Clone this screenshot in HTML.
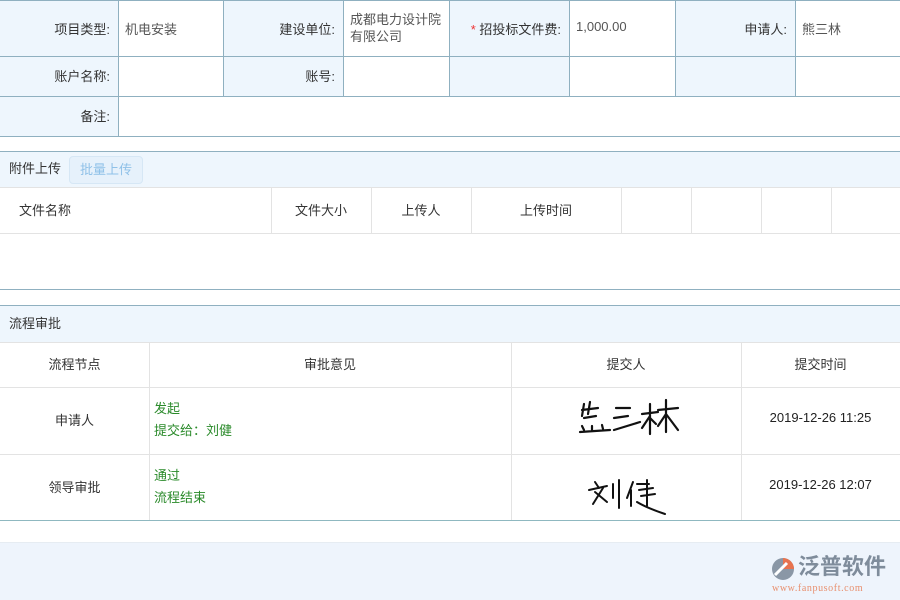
<!DOCTYPE html>
<html><head><meta charset="utf-8"><style>
*{margin:0;padding:0;box-sizing:border-box}
body{width:900px;height:600px;position:relative;background:#fff;font-family:"Liberation Sans","Noto Sans CJK SC",sans-serif;font-size:13px;color:#333;overflow:hidden}
.a{position:absolute}
.lb{background:#eef6fd}
.r{text-align:right;padding-right:8px}
.c{text-align:center}
</style></head><body>
<div class="a" style="left:0;top:0;width:900px;height:137px;border-top:1px solid #8fb0c0;"></div>
<div class="a lb" style="left:0;top:1px;width:118px;height:135px"></div>
<div class="a lb" style="left:223px;top:1px;width:120px;height:95px"></div>
<div class="a lb" style="left:449px;top:1px;width:120px;height:95px"></div>
<div class="a lb" style="left:675px;top:1px;width:120px;height:95px"></div>
<div class="a" style="left:0;top:56px;width:900px;height:1px;background:#8fb0c0"></div>
<div class="a" style="left:0;top:96px;width:900px;height:1px;background:#8fb0c0"></div>
<div class="a" style="left:0;top:136px;width:900px;height:1px;background:#8fb0c0"></div>
<div class="a" style="left:118px;top:0;width:1px;height:137px;background:#8fb0c0"></div>
<div class="a" style="left:223px;top:0;width:1px;height:97px;background:#8fb0c0"></div>
<div class="a" style="left:343px;top:0;width:1px;height:97px;background:#8fb0c0"></div>
<div class="a" style="left:449px;top:0;width:1px;height:97px;background:#8fb0c0"></div>
<div class="a" style="left:569px;top:0;width:1px;height:97px;background:#8fb0c0"></div>
<div class="a" style="left:675px;top:0;width:1px;height:97px;background:#8fb0c0"></div>
<div class="a" style="left:795px;top:0;width:1px;height:97px;background:#8fb0c0"></div>
<div class="a r" style="left:0;top:19px;width:118px">项目类型:</div>
<div class="a" style="left:125px;top:19px;color:#555">机电安装</div>
<div class="a r" style="left:223px;top:19px;width:120px">建设单位:</div>
<div class="a" style="left:350px;top:11px;color:#555;line-height:17px">成都电力设计院<br>有限公司</div>
<div class="a r" style="left:449px;top:19px;width:120px"><span style="color:#e33">*</span> 招投标文件费:</div>
<div class="a" style="left:576px;top:19px;color:#555">1,000.00</div>
<div class="a r" style="left:675px;top:19px;width:120px">申请人:</div>
<div class="a" style="left:802px;top:19px;color:#555">熊三林</div>
<div class="a r" style="left:0;top:66px;width:118px">账户名称:</div>
<div class="a r" style="left:223px;top:66px;width:120px">账号:</div>
<div class="a r" style="left:0;top:106px;width:118px">备注:</div>

<div class="a lb" style="left:0;top:151px;width:900px;height:37px;border-top:1px solid #8fb0c0;border-bottom:1px solid #e3e3e3"></div>
<div class="a" style="left:9px;top:158px">附件上传</div>
<div class="a c" style="left:69px;top:156px;width:74px;height:28px;line-height:26px;border:1px solid #d6e7f5;border-radius:4px;background:#e6f1fb;color:#8fc1e8">批量上传</div>
<div class="a" style="left:19px;top:200px">文件名称</div>
<div class="a c" style="left:271px;top:200px;width:100px">文件大小</div>
<div class="a c" style="left:371px;top:200px;width:100px">上传人</div>
<div class="a c" style="left:471px;top:200px;width:150px">上传时间</div>
<div class="a" style="left:271px;top:188px;width:1px;height:45px;background:#e3e3e3"></div>
<div class="a" style="left:371px;top:188px;width:1px;height:45px;background:#e3e3e3"></div>
<div class="a" style="left:471px;top:188px;width:1px;height:45px;background:#e3e3e3"></div>
<div class="a" style="left:621px;top:188px;width:1px;height:45px;background:#e3e3e3"></div>
<div class="a" style="left:691px;top:188px;width:1px;height:45px;background:#e3e3e3"></div>
<div class="a" style="left:761px;top:188px;width:1px;height:45px;background:#e3e3e3"></div>
<div class="a" style="left:831px;top:188px;width:1px;height:45px;background:#e3e3e3"></div>
<div class="a" style="left:0;top:233px;width:900px;height:1px;background:#e3e3e3"></div>
<div class="a" style="left:0;top:289px;width:900px;height:1px;background:#8fb0c0"></div>

<div class="a lb" style="left:0;top:305px;width:900px;height:38px;border-top:1px solid #8fb0c0;border-bottom:1px solid #e3e3e3"></div>
<div class="a" style="left:9px;top:313px">流程审批</div>
<div class="a c" style="left:0;top:354px;width:149px">流程节点</div>
<div class="a c" style="left:149px;top:354px;width:362px">审批意见</div>
<div class="a c" style="left:511px;top:354px;width:230px">提交人</div>
<div class="a c" style="left:741px;top:354px;width:159px">提交时间</div>
<div class="a" style="left:0;top:387px;width:900px;height:1px;background:#e3e3e3"></div>
<div class="a" style="left:0;top:454px;width:900px;height:1px;background:#e3e3e3"></div>
<div class="a" style="left:0;top:520px;width:900px;height:1px;background:#8fb8c0"></div>
<div class="a" style="left:149px;top:343px;width:1px;height:177px;background:#e3e3e3"></div>
<div class="a" style="left:511px;top:343px;width:1px;height:177px;background:#e3e3e3"></div>
<div class="a" style="left:741px;top:343px;width:1px;height:177px;background:#e3e3e3"></div>
<div class="a c" style="left:0;top:410px;width:149px">申请人</div>
<div class="a c" style="left:0;top:477px;width:149px">领导审批</div>
<div class="a" style="left:154px;top:398px;color:#2a8a2a;line-height:22px">发起<br>提交给：刘健</div>
<div class="a" style="left:154px;top:465px;color:#2a8a2a;line-height:22px">通过<br>流程结束</div>
<div class="a c" style="left:741px;top:410px;width:159px;color:#222">2019-12-26 11:25</div>
<div class="a c" style="left:741px;top:477px;width:159px;color:#222">2019-12-26 12:07</div>
<svg class="a" style="left:570px;top:396px" width="120" height="45" fill="none" stroke="#111" stroke-width="2.2" stroke-linecap="round">
<path d="M14 8 L12 20 M20 6 L18 18 M12 14 L28 12 M14 22 L26 20 M10 36 L40 34 M12 30 L14 34 M22 30 L22 34 M32 29 L33 33"/>
<path d="M46 12 L60 12 M44 22 L58 20 M44 34 L70 26"/>
<path d="M80 8 L80 38 M72 18 L88 16 M80 20 L72 32 M80 22 L86 28 M96 4 L96 36 M88 14 L108 12 M96 18 L88 30 M96 18 L108 34"/>
</svg>
<svg class="a" style="left:585px;top:472px" width="90" height="45" fill="none" stroke="#111" stroke-width="2" stroke-linecap="round">
<path d="M10 10 L14 16 M4 18 L22 14 M18 16 L8 32 M10 20 L22 30 M28 12 L28 26 M34 8 L34 36"/>
<path d="M48 10 L42 26 M46 18 L46 34 M52 12 L64 12 M54 18 L68 16 M56 24 L70 22 M62 8 L62 34 M52 30 Q62 36 80 42"/>
</svg>

<div class="a" style="left:0;top:542px;width:900px;height:58px;background:#eef4fc;border-top:1px solid #e6ecf2"></div>
<svg class="a" style="left:770px;top:556px" width="26" height="26"><circle cx="13" cy="13" r="11" fill="#8a97a6"/><path d="M13 2 A11 11 0 0 1 24 13 L13 13 Z" fill="#e8734f"/><path d="M5 19 L17 7" stroke="#fff" stroke-width="3"/></svg>
<div class="a" style="left:798px;top:553px;font-size:22px;line-height:28px;color:#7f8c9b;font-weight:bold">泛普软件</div>
<div class="a" style="left:772px;top:583px;font-size:10px;color:#e8906f;font-family:'Liberation Serif',serif;letter-spacing:0.6px">www.fanpusoft.com</div>
</body></html>
